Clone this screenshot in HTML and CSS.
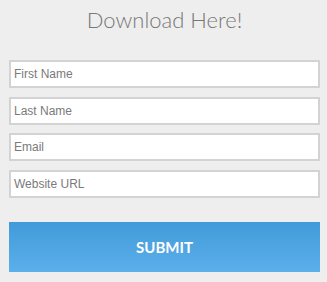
FILE: index.html
```html
<!DOCTYPE html>
<html lang="en">
  <head>
    <meta charset="UTF-8" />
    <meta name="viewport" content="width=device-width, initial-scale=1.0" />
    <title>Download Here!</title>
    <link rel="stylesheet" href="styles.css">
  </head>
  <body>
    <div id="download-box">
      <h1>Download Here!</h1>
      <form id="download-form">
        <input type="text" class="field" placeholder="First Name" />
        <input type="text" class="field" placeholder="Last Name" />
        <input type="email" class="field" placeholder="Email" />
        <input type="text" class="field" placeholder="Website URL" />
        <button type="button" id="submit">SUBMIT</button>
      </form>
    </div>
  </body>
</html>
```

FILE: styles.css
```css
body {
  margin: 0;
  background-color: #eeeeee;
}

#download-box {
  width: 311px;
  margin-left: 9px;
}

h1 {
  margin: 4px 0 0 0;
  height: 56px;
  text-align: center;
  font-family: "Lato", sans-serif;
  font-weight: 300;
  font-size: 22px;
  line-height: 32px;
  color: #777777;
}

#download-form {
  display: flex;
  flex-direction: column;
}

.field {
  box-sizing: border-box;
  height: 28px;
  margin-bottom: 8.5px;
  padding: 0 3px;
  border: 2px solid #d3d3d3;
  background-color: #ffffff;
  font-family: "Liberation Sans", Arial, sans-serif;
  font-size: 12px;
  color: #555555;
  outline: none;
}

.field::placeholder {
  color: #7a7a7a;
}

#submit {
  margin-top: 16px;
  height: 50px;
  padding-bottom: 2px;
  border: none;
  background: linear-gradient(#419ad8, #5bb0ec);
  color: #ffffff;
  font-family: "Lato", sans-serif;
  font-weight: bold;
  font-size: 15px;
  cursor: pointer;
}
```
